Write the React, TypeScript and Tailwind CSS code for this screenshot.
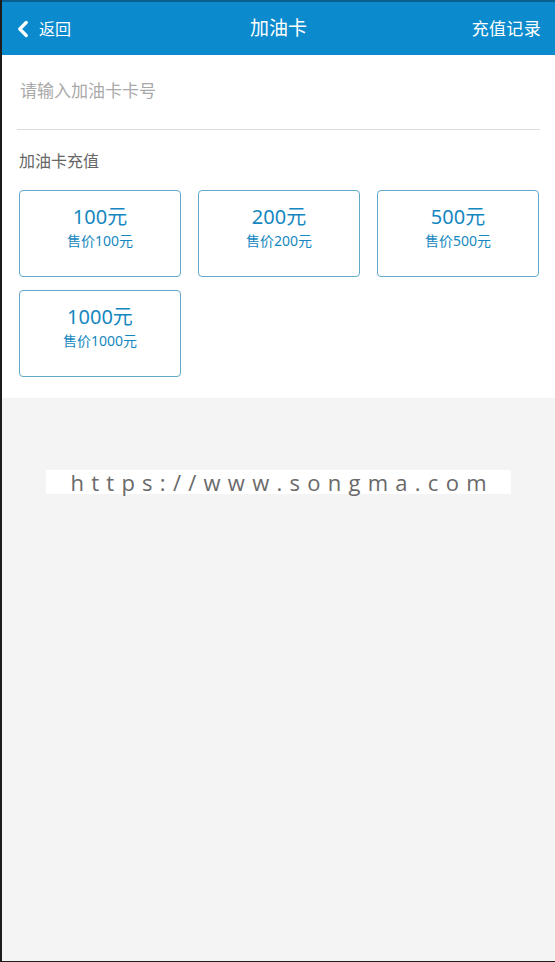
import { ChevronLeft } from 'lucide-react';

const cards = [
  { value: '100元', price: '售价100元' },
  { value: '200元', price: '售价200元' },
  { value: '500元', price: '售价500元' },
  { value: '1000元', price: '售价1000元' },
];

const font = { fontFamily: '"Noto Sans", "Noto Sans CJK SC", sans-serif' };

export default function App() {
  return (
    <div className="w-[555px] h-[962px] flex flex-col bg-[#f4f4f4] border-l-2 border-b border-[#1c1c1c] overflow-hidden" style={font}>
      {/* header */}
      <div className="h-[55px] shrink-0 bg-[#0b8bcd] border-t-2 border-[#0a5f91] flex items-center px-[10px] text-white relative">
        <div className="flex items-center gap-[3px]">
          <ChevronLeft size={26} strokeWidth={3} className="-ml-[2px]" />
          <span className="text-[16px]">返回</span>
        </div>
        <div className="absolute left-0 right-0 text-center text-[19px] pointer-events-none">加油卡</div>
        <div className="ml-auto text-[17px] mr-[4px] tracking-[0.02em]">充值记录</div>
      </div>

      {/* content */}
      <div className="bg-white shrink-0 pb-[21px]">
        <div className="mx-[15px] h-[75px] border-b border-[#dcdcdc] flex items-center">
          <span className="text-[17px] text-[#a9a9a9] pl-[3px] -mt-[2px]">请输入加油卡卡号</span>
        </div>
        <div className="px-[17px] pt-[19px] text-[16px] text-[#666]">加油卡充值</div>
        <div className="grid grid-cols-3 gap-x-[17px] gap-y-[13px] pl-[17px] pr-[16px] mt-[17px]">
          {cards.map((c) => (
            <div
              key={c.value}
              className="h-[87px] rounded-[4px] border border-[#5fa9cb] flex flex-col items-center pt-[12px] text-[#1587c0]"
            >
              <div className="text-[20px] leading-[28px]">{c.value}</div>
              <div className="text-[14px] leading-[20px]">{c.price}</div>
            </div>
          ))}
        </div>
      </div>

      {/* watermark */}
      <div className="mt-[72px] ml-[44px] w-[465px] h-[24px] bg-white flex items-center justify-center">
        <span className="text-[22px] text-[#6a6a6a] tracking-[0.33em] leading-none pl-[0.33em]" style={{ fontFamily: '"Open Sans", sans-serif' }}>
          https://www.songma.com
        </span>
      </div>
    </div>
  );
}
